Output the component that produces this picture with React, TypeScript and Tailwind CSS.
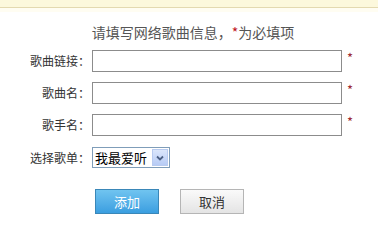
import React from "react";

const font = { fontFamily: '"Noto Sans CJK SC", "Noto Sans", sans-serif' };

function Row({ label, children }: { label: string; children: React.ReactNode }) {
  return (
    <div className="flex items-center h-[22px]">
      <div className="w-[92px] pr-[2px] text-right text-[12px] text-[#333] leading-none">{label}</div>
      {children}
    </div>
  );
}

function Star() {
  return <span className="ml-[5px] self-start mt-[1px] text-[#9e2a34] text-[13px] leading-none">*</span>;
}

export default function App() {
  return (
    <div className="w-[378px] h-[228px] bg-white overflow-hidden" style={font}>
      <div className="h-[8px] bg-[#fcf8dc] border-b border-[#e3d9b0]" />
      <div className="h-[4px] bg-[#fffdf2]" />
      <div className="mt-[11px] text-center text-[14px] leading-[18px] text-[#555] pl-[8px]">
        请填写网络歌曲信息，<span className="text-[#c0141c]">*</span>为必填项
      </div>
      <div className="mt-[9px] flex flex-col gap-[10px]">
        <Row label="歌曲链接：">
          <div className="w-[250px] h-[22px] border border-[#8c8c8c] bg-white" />
          <Star />
        </Row>
        <Row label="歌曲名：">
          <div className="w-[250px] h-[22px] border border-[#8c8c8c] bg-white" />
          <Star />
        </Row>
        <Row label="歌手名：">
          <div className="w-[250px] h-[22px] border border-[#8c8c8c] bg-white" />
          <Star />
        </Row>
      </div>
      <div className="mt-[11px] flex items-center h-[21px]">
        <div className="w-[92px] pr-[2px] text-right text-[12px] text-[#333] leading-none">选择歌单：</div>
        <div className="w-[78px] h-[21px] border border-[#7f9db9] bg-white flex items-center pl-[2px] pr-[1px]">
          <span className="text-[13px] text-black leading-none flex-1">我最爱听</span>
          <div className="w-[16px] h-[17px] bg-gradient-to-b from-[#dbe6fb] to-[#b7cbf5] border border-[#b8cbf0] flex items-center justify-center">
            <svg width="8" height="6" viewBox="0 0 8 6">
              <path d="M1 1.5 L4 4.5 L7 1.5" stroke="#4d6185" strokeWidth="1.8" fill="none" />
            </svg>
          </div>
        </div>
      </div>
      <div className="mt-[21px] flex gap-[21px] pl-[95px]">
        <button className="w-[64px] h-[25px] border border-[#3a87b8] bg-gradient-to-b from-[#70c4f0] to-[#3a9ee0] text-white text-[13px] leading-none">
          添加
        </button>
        <button className="w-[64px] h-[25px] border border-[#b5b5b5] bg-gradient-to-b from-[#fafafa] to-[#e4e4e4] text-[#333] text-[13px] leading-none">
          取消
        </button>
      </div>
    </div>
  );
}
